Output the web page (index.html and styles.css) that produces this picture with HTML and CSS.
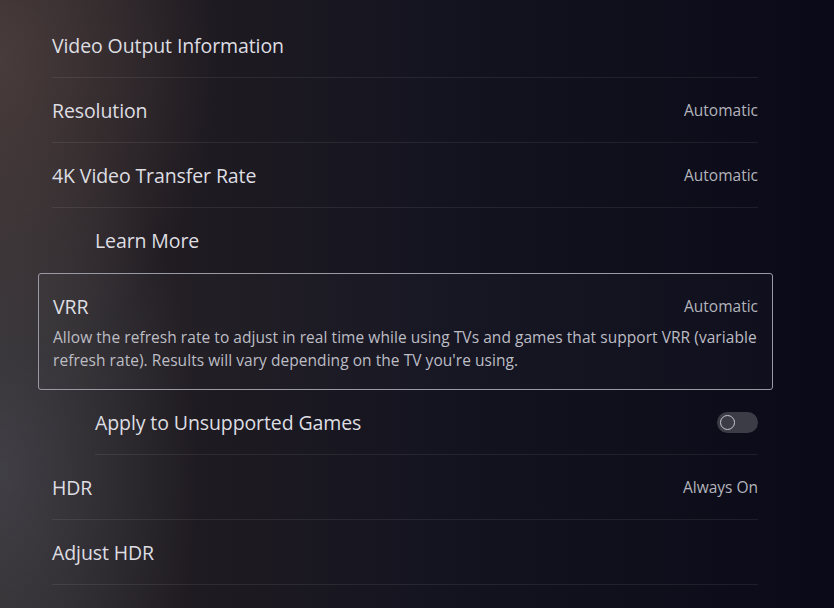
FILE: index.html
```html
<!DOCTYPE html>
<html lang="en">
<head>
  <meta charset="UTF-8" />
  <meta name="viewport" content="width=device-width, initial-scale=1.0"/>
  <title>Video Output</title>
  <link rel="stylesheet" href="styles.css">
</head>
<body>
  <div class="settings">
    <div class="row">
      <span class="label">Video Output Information</span>
    </div>
    <div class="row">
      <span class="label">Resolution</span>
      <span class="value">Automatic</span>
    </div>
    <div class="row">
      <span class="label">4K Video Transfer Rate</span>
      <span class="value">Automatic</span>
    </div>
    <div class="row sub no-line">
      <span class="label">Learn More</span>
    </div>
    <div class="focus">
      <div class="focus-head">
        <span class="label">VRR</span>
        <span class="value">Automatic</span>
      </div>
      <p class="desc">Allow the refresh rate to adjust in real time while using TVs and games that support VRR (variable refresh rate). Results will vary depending on the TV you're using.</p>
    </div>
    <div class="row sub">
      <span class="label">Apply to Unsupported Games</span>
      <span class="toggle"><span class="knob"></span></span>
    </div>
    <div class="row">
      <span class="label">HDR</span>
      <span class="value">Always On</span>
    </div>
    <div class="row">
      <span class="label">Adjust HDR</span>
    </div>
  </div>
</body>
</html>
```

FILE: styles.css
```css
html, body {
  height: 100%;
}
body {
  margin: 0;
  font-family: "Open Sans", "Noto Sans", sans-serif;
  color: #dedee2;
  background:
    radial-gradient(ellipse 220px 300px at 0 60px, rgba(92,74,72,0.6), rgba(92,74,72,0) 100%),
    radial-gradient(ellipse 200px 380px at 0 470px, rgba(78,80,88,0.6), rgba(78,80,88,0) 100%),
    linear-gradient(to right, #2c2628 0%, #1f1b21 22%, #131320 55%, #0a0a18 100%);
  overflow: hidden;
}
.settings {
  width: 706px;
  margin-left: 52px;
  padding-top: 13px;
}
.row {
  height: 64px;
  display: flex;
  align-items: center;
  justify-content: space-between;
  border-bottom: 1px solid rgba(255,255,255,0.08);
}
.row.sub {
  margin-left: 43px;
}
.row.no-line {
  border-bottom-color: transparent;
}
.label {
  font-size: 19.5px;
  letter-spacing: -0.1px;
}
.value {
  font-size: 15.5px;
  color: #b4b4bc;
}
.focus {
  margin: 0 -15px 0 -14px;
  height: 117px;
  box-sizing: border-box;
  padding: 20px 14px 0 14px;
  border: 1.5px solid #9a9aa4;
  border-radius: 3px;
  background: rgba(255,255,255,0.02);
}
.focus-head {
  display: flex;
  justify-content: space-between;
  align-items: center;
  height: 26px;
  margin-top: -1px;
}
.desc {
  margin: 7px 0 0;
  font-size: 15.5px;
  line-height: 23px;
  color: #bdbdc4;
  letter-spacing: 0.05px;
}
.toggle {
  width: 41px;
  height: 21px;
  border-radius: 11px;
  background: #3c3c46;
  display: flex;
  align-items: center;
  padding-left: 3px;
  box-sizing: border-box;
}
.knob {
  width: 15px;
  height: 15px;
  border-radius: 50%;
  border: 1.5px solid #c8c8d0;
  box-sizing: border-box;
}
```
